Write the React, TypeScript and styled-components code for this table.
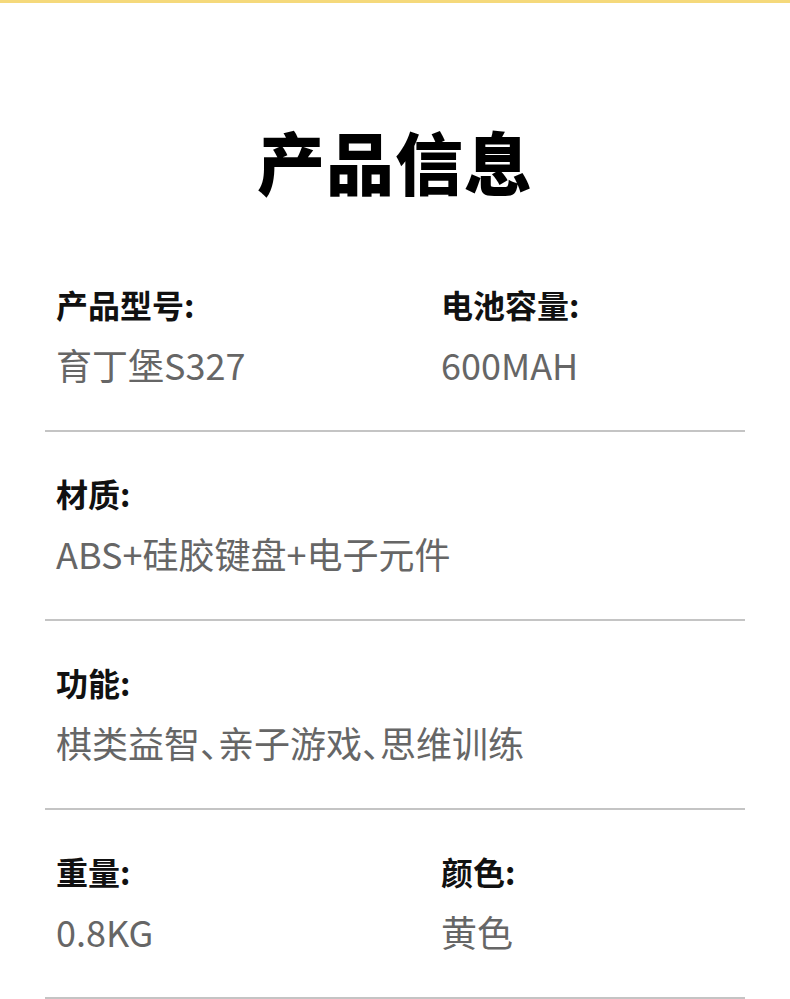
import React from 'react';
import styled, { createGlobalStyle } from 'styled-components';

interface SpecItem {
  label: string;
  value: string;
}

const rows: SpecItem[][] = [
  [
    { label: '产品型号:', value: '育丁堡S327' },
    { label: '电池容量:', value: '600MAH' },
  ],
  [{ label: '材质:', value: 'ABS+硅胶键盘+电子元件' }],
  [{ label: '功能:', value: '棋类益智、亲子游戏、思维训练' }],
  [
    { label: '重量:', value: '0.8KG' },
    { label: '颜色:', value: '黄色' },
  ],
];

const GlobalStyle = createGlobalStyle`
  html, body {
    margin: 0;
    padding: 0;
    background: #fff;
  }
  body {
    font-family: 'Noto Sans CJK SC', 'Noto Sans', sans-serif;
  }
`;

const Page = styled.div`
  width: 790px;
  height: 999px;
  overflow: hidden;
  background: #fff;
  border-top: 3px solid #f5d97b;
  box-sizing: border-box;
`;

const Title = styled.h1`
  margin: 124px 0 48px;
  font-size: 68px;
  line-height: 68px;
  font-weight: 900;
  color: #000;
  text-align: center;
  letter-spacing: 1px;
`;

const List = styled.div`
  margin: 0 45px;
`;

const Row = styled.div`
  display: grid;
  grid-template-columns: 385px 1fr;
  padding: 41px 11px 44px;
  border-bottom: 2px solid #c4c4c4;
`;

const Field = styled.div<{ wide: boolean }>`
  grid-column: ${(props) => (props.wide ? '1 / -1' : 'auto')};
  display: flex;
  flex-direction: column;
  gap: 18px;
`;

const Label = styled.div`
  font-size: 32px;
  line-height: 40px;
  font-weight: 700;
  color: #111;
`;

const Value = styled.div`
  font-size: 36px;
  line-height: 44px;
  font-weight: 400;
  color: #666;
  white-space: nowrap;
  font-feature-settings: 'halt';
`;

const App: React.FC = () => (
  <>
    <GlobalStyle />
    <Page>
      <Title>产品信息</Title>
      <List>
        {rows.map((row, i) => (
          <Row key={i}>
            {row.map((item) => (
              <Field key={item.label} wide={row.length === 1}>
                <Label>{item.label}</Label>
                <Value>{item.value}</Value>
              </Field>
            ))}
          </Row>
        ))}
      </List>
    </Page>
  </>
);

export default App;
